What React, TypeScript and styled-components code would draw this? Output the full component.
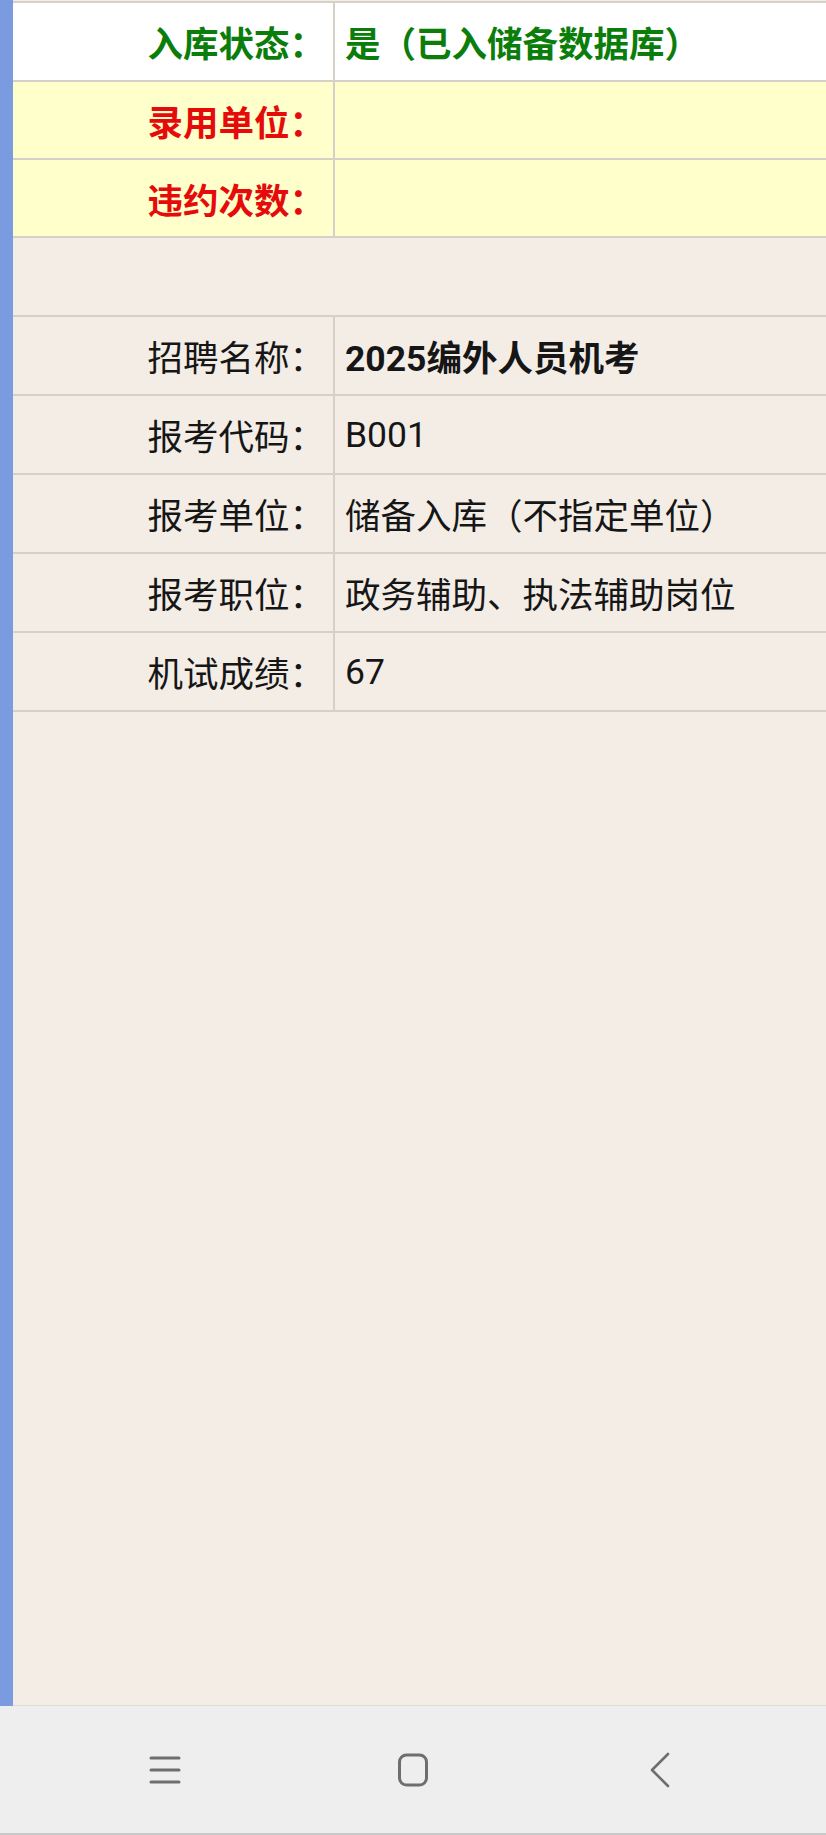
import React from "react";
import styled, { createGlobalStyle } from "styled-components";

const GlobalStyle = createGlobalStyle`
  html, body {
    margin: 0;
    padding: 0;
    background: #eeeeee;
  }
  body {
    font-family: Roboto, "Noto Sans CJK SC", "Noto Sans", sans-serif;
  }
  * { box-sizing: border-box; }
`;

const Page = styled.div`
  display: flex;
  flex-direction: column;
  width: 826px;
  height: 1835px;
  overflow: hidden;
`;

const Main = styled.div`
  flex: 1;
  display: flex;
  min-height: 0;
`;

const SideBar = styled.div`
  width: 13px;
  flex: none;
  background: #7a9be0;
`;

const Content = styled.div`
  flex: 1;
  background: #f3ede6;
  padding-top: 1px;
  border-bottom: 1px solid #dedbd6;
  display: flex;
  flex-direction: column;
`;

const Table = styled.div`
  display: flex;
  flex-direction: column;
  border-top: 2px solid #d5d1c8;
`;

const Spacer = styled.div`
  height: 77px;
`;

type Tone = "green" | "red" | "plain";

const toneColor: Record<Tone, string> = {
  green: "#0b7d0b",
  red: "#e60b0b",
  plain: "#161616",
};

const Row = styled.div<{ $bg: string; $h: number }>`
  display: grid;
  grid-template-columns: 322px 1fr;
  height: ${(p) => p.$h + 2}px;
  background: ${(p) => p.$bg};
  border-bottom: 2px solid #d5d1c8;
`;

const Label = styled.div<{ $tone: Tone; $bold: boolean }>`
  display: flex;
  align-items: center;
  justify-content: flex-end;
  padding-right: 8px;
  border-right: 2px solid #d5d1c8;
  font-size: 35.5px;
  font-weight: ${(p) => (p.$bold ? 700 : 400)};
  color: ${(p) => toneColor[p.$tone]};
  white-space: nowrap;
`;

const Value = styled.div<{ $tone: Tone; $bold: boolean }>`
  display: flex;
  align-items: center;
  padding-left: 10px;
  font-size: 35.5px;
  font-weight: ${(p) => (p.$bold ? 700 : 400)};
  color: ${(p) => toneColor[p.$tone]};
  white-space: nowrap;
`;

const NavBar = styled.div`
  height: 129px;
  flex: none;
  background: #eeeeee;
  border-bottom: 2px solid #c9c9c9;
  display: flex;
  align-items: center;
  justify-content: center;
`;

const NavButton = styled.div`
  width: 248px;
  height: 40px;
  display: flex;
  align-items: center;
  justify-content: center;
  color: #6e6e6e;
`;

type RowData = {
  label: string;
  value: string;
  tone: Tone;
  bold: boolean;
  valueBold: boolean;
  bg: string;
  h: number;
};

const topRows: RowData[] = [
  { label: "入库状态：", value: "是（已入储备数据库）", tone: "green", bold: true, valueBold: true, bg: "#ffffff", h: 77 },
  { label: "录用单位：", value: "", tone: "red", bold: true, valueBold: true, bg: "#ffffcc", h: 76 },
  { label: "违约次数：", value: "", tone: "red", bold: true, valueBold: true, bg: "#ffffcc", h: 76 },
];

const infoRows: RowData[] = [
  { label: "招聘名称：", value: "2025编外人员机考", tone: "plain", bold: false, valueBold: true, bg: "transparent", h: 77 },
  { label: "报考代码：", value: "B001", tone: "plain", bold: false, valueBold: false, bg: "transparent", h: 77 },
  { label: "报考单位：", value: "储备入库（不指定单位）", tone: "plain", bold: false, valueBold: false, bg: "transparent", h: 77 },
  { label: "报考职位：", value: "政务辅助、执法辅助岗位", tone: "plain", bold: false, valueBold: false, bg: "transparent", h: 77 },
  { label: "机试成绩：", value: "67", tone: "plain", bold: false, valueBold: false, bg: "transparent", h: 77 },
];

const InfoRow = ({ r }: { r: RowData }) => (
  <Row $bg={r.bg} $h={r.h}>
    <Label $tone={r.tone} $bold={r.bold}>{r.label}</Label>
    <Value $tone={r.tone} $bold={r.valueBold}>{r.value}</Value>
  </Row>
);

const MenuIcon = () => (
  <svg width="34" height="32" viewBox="0 0 34 32" fill="none">
    <g stroke="currentColor" strokeWidth="3" strokeLinecap="round">
      <line x1="3" y1="4" x2="31" y2="4" />
      <line x1="3" y1="16" x2="31" y2="16" />
      <line x1="3" y1="28" x2="31" y2="28" />
    </g>
  </svg>
);

const HomeIcon = () => (
  <svg width="34" height="36" viewBox="0 0 34 36" fill="none">
    <rect x="3.5" y="3" width="27" height="30" rx="7" stroke="currentColor" strokeWidth="3" />
  </svg>
);

const BackIcon = () => (
  <svg width="24" height="36" viewBox="0 0 24 36" fill="none">
    <polyline points="19,2 3,18 19,34" stroke="currentColor" strokeWidth="2.6" strokeLinecap="round" strokeLinejoin="round" />
  </svg>
);

export default function App() {
  return (
    <>
      <GlobalStyle />
      <Page>
        <Main>
          <SideBar />
          <Content>
            <Table>
              {topRows.map((r) => (
                <InfoRow key={r.label} r={r} />
              ))}
            </Table>
            <Spacer />
            <Table>
              {infoRows.map((r) => (
                <InfoRow key={r.label} r={r} />
              ))}
            </Table>
          </Content>
        </Main>
        <NavBar>
          <NavButton><MenuIcon /></NavButton>
          <NavButton><HomeIcon /></NavButton>
          <NavButton><BackIcon /></NavButton>
        </NavBar>
      </Page>
    </>
  );
}
